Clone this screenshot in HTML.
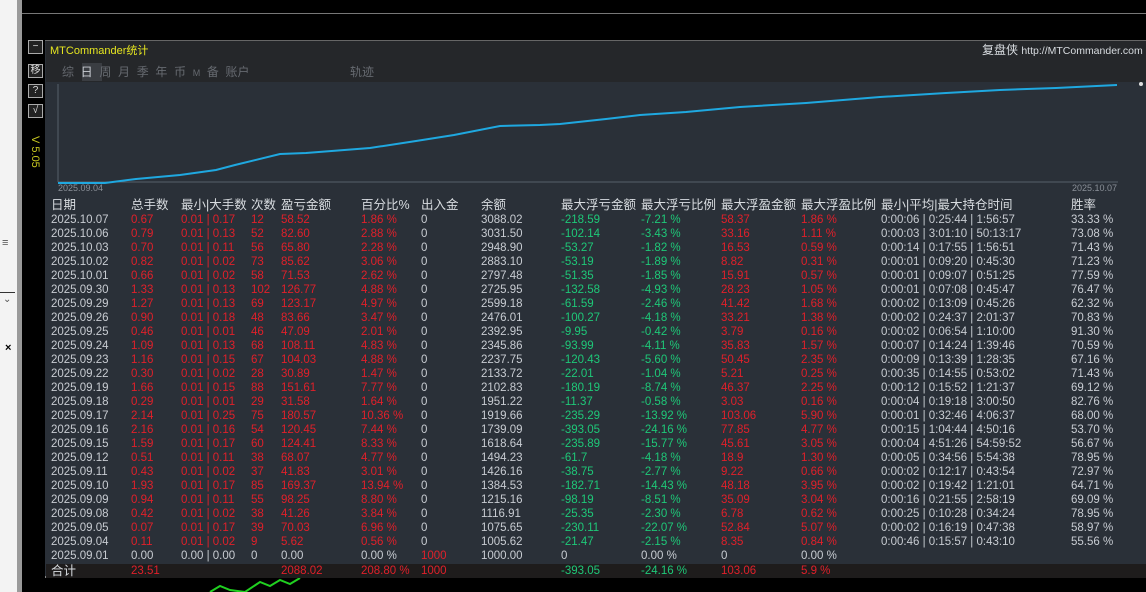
<!DOCTYPE html>
<html><head><meta charset="utf-8"><style>
*{margin:0;padding:0;box-sizing:border-box}
body{width:1146px;height:592px;background:#000;position:relative;overflow:hidden;font-family:"Liberation Sans","Noto Sans CJK SC",sans-serif}
.ab{position:absolute}
.t{position:absolute;font-size:11.5px;white-space:nowrap;line-height:14px}
.w{color:#c8ccd2}.r{color:#e0202a}.g{color:#1ec878}.h{color:#d8dce0;font-size:12.5px}
.btn{position:absolute;left:28px;width:15px;height:14px;border:1px solid #aaa;color:#ddd;font-size:10px;text-align:center;line-height:12px;background:#222}
</style></head><body>
<div class="ab" style="left:0;top:0;width:17px;height:592px;background:#f3f3f3"></div>
<div class="ab" style="left:17px;top:0;width:5px;height:592px;background:#9a9a9a"></div>
<div class="ab" style="left:0;top:292px;width:15px;height:1px;background:#333"></div>
<div class="t" style="left:2px;top:236px;color:#555;font-size:11px">≡</div>
<div class="t" style="left:3px;top:293px;color:#555;font-size:10px">⌄</div>
<div class="t" style="left:5px;top:341px;color:#000;font-size:11px;font-weight:bold">×</div>
<div class="ab" style="left:22px;top:13px;width:1124px;height:1px;background:#777"></div>
<div class="btn" style="top:40px">−</div>
<div class="btn" style="top:64px">移</div>
<div class="btn" style="top:84px">?</div>
<div class="btn" style="top:104px">√</div>
<div class="t" style="top:136px;color:#c8c820;font-size:11px;transform:rotate(90deg);transform-origin:left top;left:42px">V 5.05</div>
<div class="ab" style="left:45px;top:40px;width:1101px;height:538px;background:#2a3038;border-top:1px solid #666;border-bottom:2px solid #888"></div>
<div class="ab" style="left:46px;top:41px;width:1100px;height:41px;background:#25272a"></div>
<div class="t" style="left:50px;top:44px;color:#e6e620;font-size:11px">MTCommander统计</div>
<div class="t" style="left:982px;top:43px;color:#d8dce0;font-size:12px">复盘侠 <span style="font-size:10.5px">http://MTCommander.com</span></div>
<div class="ab" style="left:82px;top:63px;width:20px;height:18px;background:#3a3d42"></div>
<div class="t" style="left:62px;top:65px;color:#666a70;font-size:12px;word-spacing:0">综&nbsp; <span style="color:#c8ccd2">日</span>&nbsp; 周&nbsp; 月&nbsp; 季&nbsp; 年&nbsp; 币&nbsp; <span style="font-size:9px">M</span>&nbsp; 备&nbsp; 账户</div>
<div class="t" style="left:350px;top:65px;color:#666a70;font-size:12px">轨迹</div>
<svg class="ab" style="left:46px;top:82px" width="1100" height="110">
<line x1="12" y1="2" x2="12" y2="100" stroke="#55606a"/>
<line x1="12" y1="100" x2="1072" y2="100" stroke="#55606a"/>
<polyline fill="none" stroke="#1fa8e0" stroke-width="2" points="12,101 59,101 90,97 134,93 170,88 189,83 234,72 260,71 324,66 370,59 408,53 454,44 494,43 514,42 560,37 594,33 640,30 694,25 760,21 834,15 900,11 954,8 1010,6 1071,3"/>
<circle cx="1095" cy="2" r="2" fill="#ddd"/>
</svg>
<div class="t" style="left:58px;top:181px;color:#8a9098;font-size:9px">2025.09.04</div>
<div class="t" style="left:1072px;top:181px;color:#8a9098;font-size:9px">2025.10.07</div>
<div class="ab" style="left:46px;top:564px;width:1100px;height:14px;background:#1e1c1c"></div>
<div id="tb"></div>
<svg class="ab" style="left:200px;top:578px" width="110" height="14"><polyline fill="none" stroke="#20d020" stroke-width="2" points="10,14 20,8 30,12 45,14 60,4 70,8 80,2 90,6 100,0"/></svg>
<script>
const cols=[51,131,181,251,281,361,421,481,561,641,721,801,881,1071];
const H=["日期","总手数","最小|大手数","次数","盈亏金额","百分比%","出入金","余额","最大浮亏金额","最大浮亏比例","最大浮盈金额","最大浮盈比例","最小|平均|最大持仓时间","胜率"];
const D=`2025.10.07,0.67,0.01 | 0.17,12,58.52,1.86 %,0,3088.02,-218.59,-7.21 %,58.37,1.86 %,0:00:06 | 0:25:44 | 1:56:57,33.33 %
2025.10.06,0.79,0.01 | 0.13,52,82.60,2.88 %,0,3031.50,-102.14,-3.43 %,33.16,1.11 %,0:00:03 | 3:01:10 | 50:13:17,73.08 %
2025.10.03,0.70,0.01 | 0.11,56,65.80,2.28 %,0,2948.90,-53.27,-1.82 %,16.53,0.59 %,0:00:14 | 0:17:55 | 1:56:51,71.43 %
2025.10.02,0.82,0.01 | 0.02,73,85.62,3.06 %,0,2883.10,-53.19,-1.89 %,8.82,0.31 %,0:00:01 | 0:09:20 | 0:45:30,71.23 %
2025.10.01,0.66,0.01 | 0.02,58,71.53,2.62 %,0,2797.48,-51.35,-1.85 %,15.91,0.57 %,0:00:01 | 0:09:07 | 0:51:25,77.59 %
2025.09.30,1.33,0.01 | 0.13,102,126.77,4.88 %,0,2725.95,-132.58,-4.93 %,28.23,1.05 %,0:00:01 | 0:07:08 | 0:45:47,76.47 %
2025.09.29,1.27,0.01 | 0.13,69,123.17,4.97 %,0,2599.18,-61.59,-2.46 %,41.42,1.68 %,0:00:02 | 0:13:09 | 0:45:26,62.32 %
2025.09.26,0.90,0.01 | 0.18,48,83.66,3.47 %,0,2476.01,-100.27,-4.18 %,33.21,1.38 %,0:00:02 | 0:24:37 | 2:01:37,70.83 %
2025.09.25,0.46,0.01 | 0.01,46,47.09,2.01 %,0,2392.95,-9.95,-0.42 %,3.79,0.16 %,0:00:02 | 0:06:54 | 1:10:00,91.30 %
2025.09.24,1.09,0.01 | 0.13,68,108.11,4.83 %,0,2345.86,-93.99,-4.11 %,35.83,1.57 %,0:00:07 | 0:14:24 | 1:39:46,70.59 %
2025.09.23,1.16,0.01 | 0.15,67,104.03,4.88 %,0,2237.75,-120.43,-5.60 %,50.45,2.35 %,0:00:09 | 0:13:39 | 1:28:35,67.16 %
2025.09.22,0.30,0.01 | 0.02,28,30.89,1.47 %,0,2133.72,-22.01,-1.04 %,5.21,0.25 %,0:00:35 | 0:14:55 | 0:53:02,71.43 %
2025.09.19,1.66,0.01 | 0.15,88,151.61,7.77 %,0,2102.83,-180.19,-8.74 %,46.37,2.25 %,0:00:12 | 0:15:52 | 1:21:37,69.12 %
2025.09.18,0.29,0.01 | 0.01,29,31.58,1.64 %,0,1951.22,-11.37,-0.58 %,3.03,0.16 %,0:00:04 | 0:19:18 | 3:00:50,82.76 %
2025.09.17,2.14,0.01 | 0.25,75,180.57,10.36 %,0,1919.66,-235.29,-13.92 %,103.06,5.90 %,0:00:01 | 0:32:46 | 4:06:37,68.00 %
2025.09.16,2.16,0.01 | 0.16,54,120.45,7.44 %,0,1739.09,-393.05,-24.16 %,77.85,4.77 %,0:00:15 | 1:04:44 | 4:50:16,53.70 %
2025.09.15,1.59,0.01 | 0.17,60,124.41,8.33 %,0,1618.64,-235.89,-15.77 %,45.61,3.05 %,0:00:04 | 4:51:26 | 54:59:52,56.67 %
2025.09.12,0.51,0.01 | 0.11,38,68.07,4.77 %,0,1494.23,-61.7,-4.18 %,18.9,1.30 %,0:00:05 | 0:34:56 | 5:54:38,78.95 %
2025.09.11,0.43,0.01 | 0.02,37,41.83,3.01 %,0,1426.16,-38.75,-2.77 %,9.22,0.66 %,0:00:02 | 0:12:17 | 0:43:54,72.97 %
2025.09.10,1.93,0.01 | 0.17,85,169.37,13.94 %,0,1384.53,-182.71,-14.43 %,48.18,3.95 %,0:00:02 | 0:19:42 | 1:21:01,64.71 %
2025.09.09,0.94,0.01 | 0.11,55,98.25,8.80 %,0,1215.16,-98.19,-8.51 %,35.09,3.04 %,0:00:16 | 0:21:55 | 2:58:19,69.09 %
2025.09.08,0.42,0.01 | 0.02,38,41.26,3.84 %,0,1116.91,-25.35,-2.30 %,6.78,0.62 %,0:00:25 | 0:10:28 | 0:34:24,78.95 %
2025.09.05,0.07,0.01 | 0.17,39,70.03,6.96 %,0,1075.65,-230.11,-22.07 %,52.84,5.07 %,0:00:02 | 0:16:19 | 0:47:38,58.97 %
2025.09.04,0.11,0.01 | 0.02,9,5.62,0.56 %,0,1005.62,-21.47,-2.15 %,8.35,0.84 %,0:00:46 | 0:15:57 | 0:43:10,55.56 %`.split("\n").map(l=>l.split(","));
const cls=["w","r","r","r","r","r","w","w","g","g","r","r","w","w"];
let h="";
H.forEach((s,i)=>h+=`<div class="t h" style="left:${cols[i]}px;top:198px">${s}</div>`);
D.forEach((r,j)=>r.forEach((s,i)=>h+=`<div class="t ${cls[i]}" style="left:${cols[i]}px;top:${213+j*14}px">${s}</div>`));
const last=["2025.09.01","0.00","0.00 | 0.00","0","0.00","0.00 %","1000","1000.00","0","0.00 %","0","0.00 %","",""];
const lc=["w","w","w","w","w","w","r","w","w","w","w","w","w","w"];
last.forEach((s,i)=>h+=`<div class="t ${lc[i]}" style="left:${cols[i]}px;top:549px">${s}</div>`);
const tot=["合计","23.51","","","2088.02","208.80 %","1000","","-393.05","-24.16 %","103.06","5.9 %","",""];
const tc=["h","r","r","r","r","r","r","w","g","g","r","r","w","w"];
tot.forEach((s,i)=>h+=`<div class="t ${tc[i]}" style="left:${cols[i]}px;top:564px">${s}</div>`);
document.getElementById("tb").innerHTML=h;
</script>
</body></html>
